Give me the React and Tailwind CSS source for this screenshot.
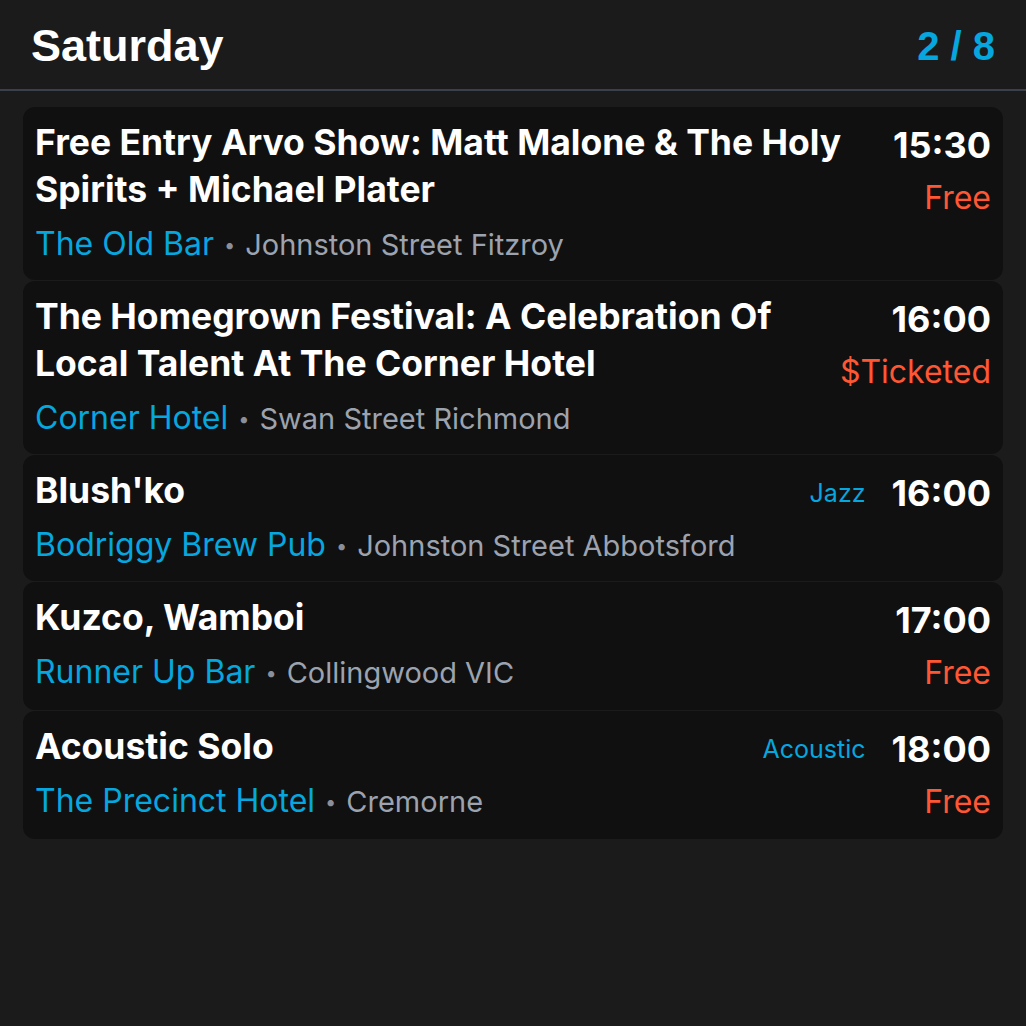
import React from "react";

const events = [
  {
    title: "Free Entry Arvo Show: Matt Malone & The Holy Spirits + Michael Plater",
    venue: "The Old Bar",
    addr: "Johnston Street Fitzroy",
    time: "15:30",
    price: "Free",
  },
  {
    title: "The Homegrown Festival: A Celebration Of Local Talent At The Corner Hotel",
    venue: "Corner Hotel",
    addr: "Swan Street Richmond",
    time: "16:00",
    price: "$Ticketed",
  },
  {
    title: "Blush'ko",
    venue: "Bodriggy Brew Pub",
    addr: "Johnston Street Abbotsford",
    time: "16:00",
    genre: "Jazz",
  },
  {
    title: "Kuzco, Wamboi",
    venue: "Runner Up Bar",
    addr: "Collingwood VIC",
    time: "17:00",
    price: "Free",
  },
  {
    title: "Acoustic Solo",
    venue: "The Precinct Hotel",
    addr: "Cremorne",
    time: "18:00",
    price: "Free",
    genre: "Acoustic",
  },
];

export default function App() {
  return (
    <div
      className="w-[1026px] h-[1026px] bg-[#1b1b1b] overflow-hidden"
      style={{ fontFamily: "Inter, 'Liberation Sans', sans-serif" }}
    >
      <div className="h-[91px] flex items-center justify-between pl-[31px] pr-[31px] pt-[2px] border-b-2 border-[#3a404c]">
        <div
          className="text-white font-bold text-[45px] leading-none"
          style={{ fontFamily: "'Liberation Sans', Arial, sans-serif" }}
        >
          Saturday
        </div>
        <div
          className="text-[#06a6df] font-bold text-[40px] leading-none"
          style={{ fontFamily: "'Liberation Sans', Arial, sans-serif" }}
        >
          2 / 8
        </div>
      </div>
      <div className="flex flex-col gap-[1px] px-[23px] pt-[16px]">
        {events.map((e, i) => (
          <div key={i} className="bg-[#101010] rounded-[12px] px-[12px] py-[12px] flex gap-[24px]">
            <div className="flex-1 min-w-0 flex flex-col gap-[7px] pb-[1px]">
              <div className="text-white font-bold text-[35.5px] leading-[47px]">
                {e.title}
              </div>
              <div className="h-[47px] flex items-baseline whitespace-nowrap leading-[47px]">
                <span className="text-[#06a6df] text-[32px]">{e.venue}</span>
                <span className="text-[#8a8f99] text-[20px] mx-[10px] relative top-[-3px]">•</span>
                <span className="text-[#9ca3af] text-[29px]">{e.addr}</span>
              </div>
            </div>
            <div className="flex flex-col items-end gap-[4px] shrink-0">
              <div className="flex items-center gap-[26px] h-[50px]">
                {e.genre && (
                  <span className="text-[#06a6df] text-[25px] leading-[50px] relative top-[1px]">{e.genre}</span>
                )}
                <span className="text-white font-bold text-[36px] leading-[50px] relative top-[1px]">{e.time}</span>
              </div>
              {e.price && (
                <div className="text-[#ff5733] text-[32px] leading-[50px]">{e.price}</div>
              )}
            </div>
          </div>
        ))}
      </div>
    </div>
  );
}
